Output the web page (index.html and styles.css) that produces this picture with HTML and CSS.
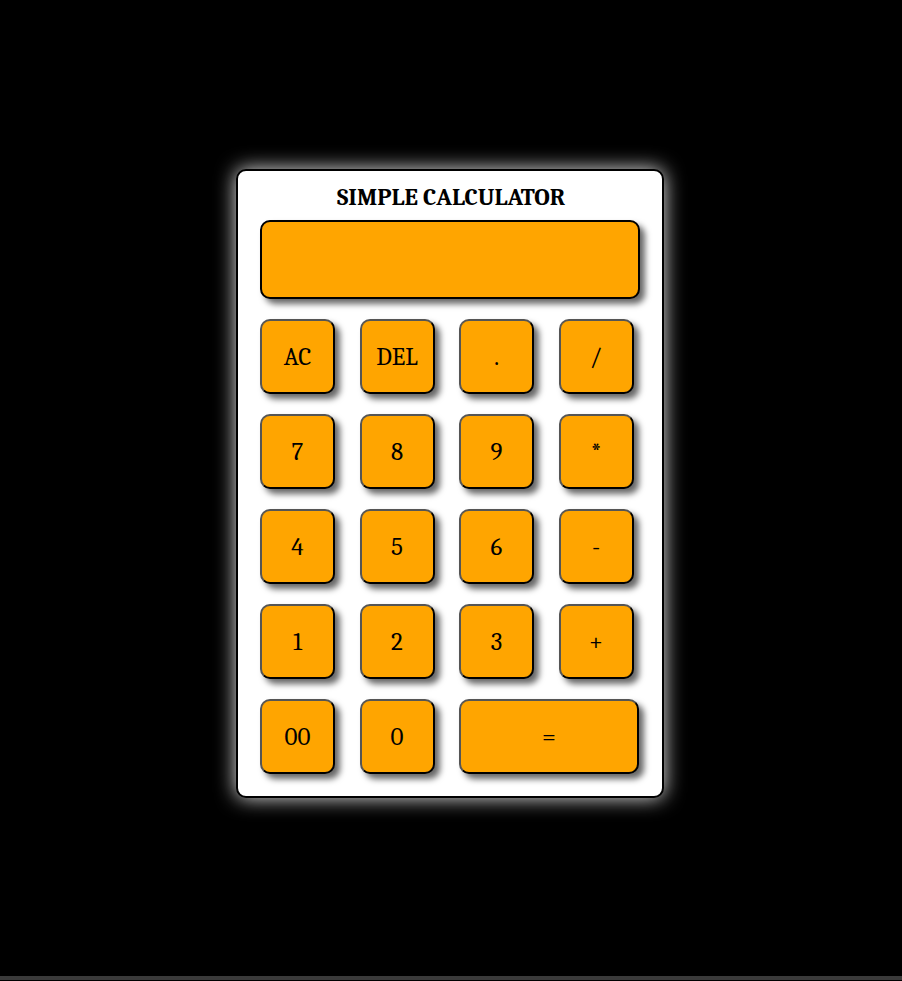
FILE: index.html
```html
<!DOCTYPE html>
<html>
<head>
<meta charset="utf-8">
<link rel="stylesheet" href="styles.css">
</head>
<body>
<main class="page">
  <div class="calc">
    <h1 class="title">SIMPLE CALCULATOR</h1>
    <div class="display"></div>
    <div class="keys">
      <button class="key">AC</button>
      <button class="key">DEL</button>
      <button class="key">.</button>
      <button class="key">/</button>
      <button class="key">7</button>
      <button class="key">8</button>
      <button class="key">9</button>
      <button class="key">*</button>
      <button class="key">4</button>
      <button class="key">5</button>
      <button class="key">6</button>
      <button class="key">-</button>
      <button class="key">1</button>
      <button class="key">2</button>
      <button class="key">3</button>
      <button class="key">+</button>
      <button class="key">00</button>
      <button class="key">0</button>
      <button class="key key-wide">=</button>
    </div>
  </div>
</main>
<div class="bottom-bar"></div>
</body>
</html>
```

FILE: styles.css
```css
html, body {
  margin: 0;
  padding: 0;
  background: #000;
  height: 100%;
  overflow: hidden;
}
body {
  display: flex;
  flex-direction: column;
  font-family: Cambria, Caladea, "DejaVu Serif", serif;
}
.page {
  flex: 1;
  display: flex;
  justify-content: center;
  align-items: flex-start;
  padding-top: 169px;
}
.calc {
  box-sizing: border-box;
  width: 428px;
  height: 629px;
  margin-left: -2px;
  background: #fff;
  border: 2px solid #000;
  border-radius: 10px;
  box-shadow: 0 0 20px rgba(255, 255, 255, 0.9);
  padding: 0 0 0 22px;
}
.title {
  margin: 12px 0 0 0;
  padding-right: 20px;
  text-align: center;
  font-size: 24px;
  font-weight: bold;
  line-height: 28px;
  color: #000;
}
.display {
  box-sizing: border-box;
  width: 380px;
  height: 79px;
  margin-top: 9px;
  background: #ffa500;
  border: 2px solid #000;
  border-radius: 10px;
  box-shadow: 5px 5px 6px rgba(0, 0, 0, 0.6);
}
.keys {
  display: grid;
  grid-template-columns: repeat(4, 75px);
  grid-auto-rows: 75px;
  column-gap: 24.5px;
  row-gap: 20px;
  margin-top: 20px;
}
.key {
  box-sizing: border-box;
  width: 75px;
  height: 75px;
  background: #ffa500;
  border: 2px solid;
  border-color: #555 #000 #000 #555;
  border-radius: 10px;
  box-shadow: 5px 5px 6px rgba(0, 0, 0, 0.6);
  font-family: Cambria, Caladea, "DejaVu Serif", serif;
  font-size: 25px;
  color: #000;
  padding: 0;
}
.key-wide {
  grid-column: span 2;
  width: 180px;
}
.bottom-bar {
  height: 4px;
  margin-bottom: 1px;
  background: #3a3a3a;
}
```
